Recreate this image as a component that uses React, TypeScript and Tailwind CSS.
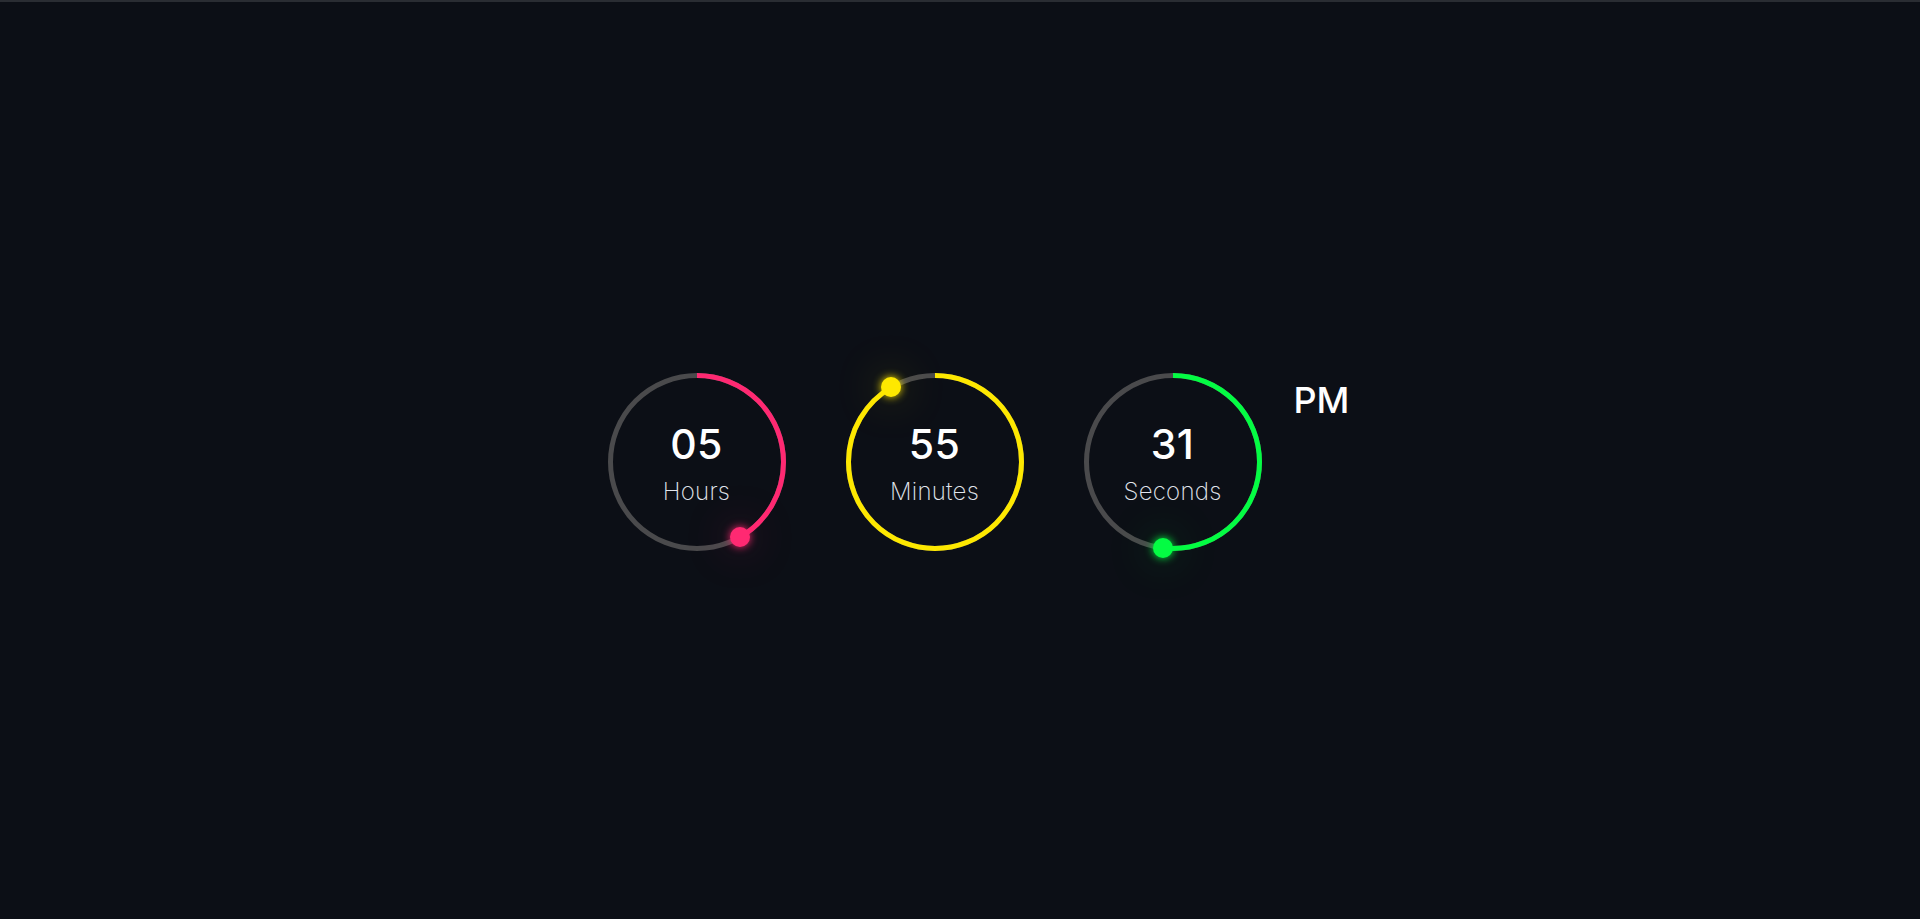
import React from "react";

type Ring = { value: string; label: string; frac: number; color: string; glow: string };

const rings: Ring[] = [
  { value: "05", label: "Hours", frac: 5 / 12, color: "#ff2972", glow: "0 0 8px #ff2972, 0 0 45px rgba(255,41,114,0.4)" },
  { value: "55", label: "Minutes", frac: 55 / 60, color: "#fee800", glow: "0 0 8px #fee800, 0 0 45px rgba(254,232,0,0.35)" },
  { value: "31", label: "Seconds", frac: 31 / 60, color: "#04fc43", glow: "0 0 8px #04fc43, 0 0 45px rgba(4,252,67,0.35)" },
];

const R = 86.5;
const C = 2 * Math.PI * R;

function Dial({ r }: { r: Ring }) {
  const ang = r.frac * 2 * Math.PI;
  const dx = 90 + R * Math.sin(ang);
  const dy = 90 - R * Math.cos(ang);
  return (
    <div className="relative w-[180px] h-[180px] shrink-0">
      <svg width="180" height="180" viewBox="0 0 180 180" className="block">
        <circle cx="90" cy="90" r={R} fill="none" stroke="#4a4a4c" strokeWidth="5" />
        <circle
          cx="90"
          cy="90"
          r={R}
          fill="none"
          stroke={r.color}
          strokeWidth="5"
          strokeDasharray={`${C * r.frac} ${C}`}
          transform="rotate(-90 90 90)"
        />
      </svg>
      <div
        className="absolute w-[20px] h-[20px] rounded-full"
        style={{ left: dx - 10, top: dy - 10, background: r.color, boxShadow: r.glow }}
      />
      <div className="absolute inset-0 flex flex-col items-center pt-[48px]">
        <div className="text-[41px] leading-[48px] font-medium text-white tracking-[0.01em]">{r.value}</div>
        <div className="mt-[9px] text-[24px] leading-[30px] font-extralight text-[#e2e6ee] tracking-[0.01em]">{r.label}</div>
      </div>
    </div>
  );
}

export default function App() {
  return (
    <div
      className="min-h-screen h-[919px] bg-[#0c0f16] border-t-2 border-[#2a2d33] flex items-center justify-center pl-[36px] pt-[3px]"
      style={{ fontFamily: "Inter, 'Noto Sans', sans-serif" }}
    >
      <div className="flex items-start">
        <div className="flex gap-[58px]">
          {rings.map((r) => (
            <Dial key={r.label} r={r} />
          ))}
        </div>
        <div className="ml-[31px] mt-[6px] text-[36px] leading-[44px] font-medium text-white">PM</div>
      </div>
    </div>
  );
}
